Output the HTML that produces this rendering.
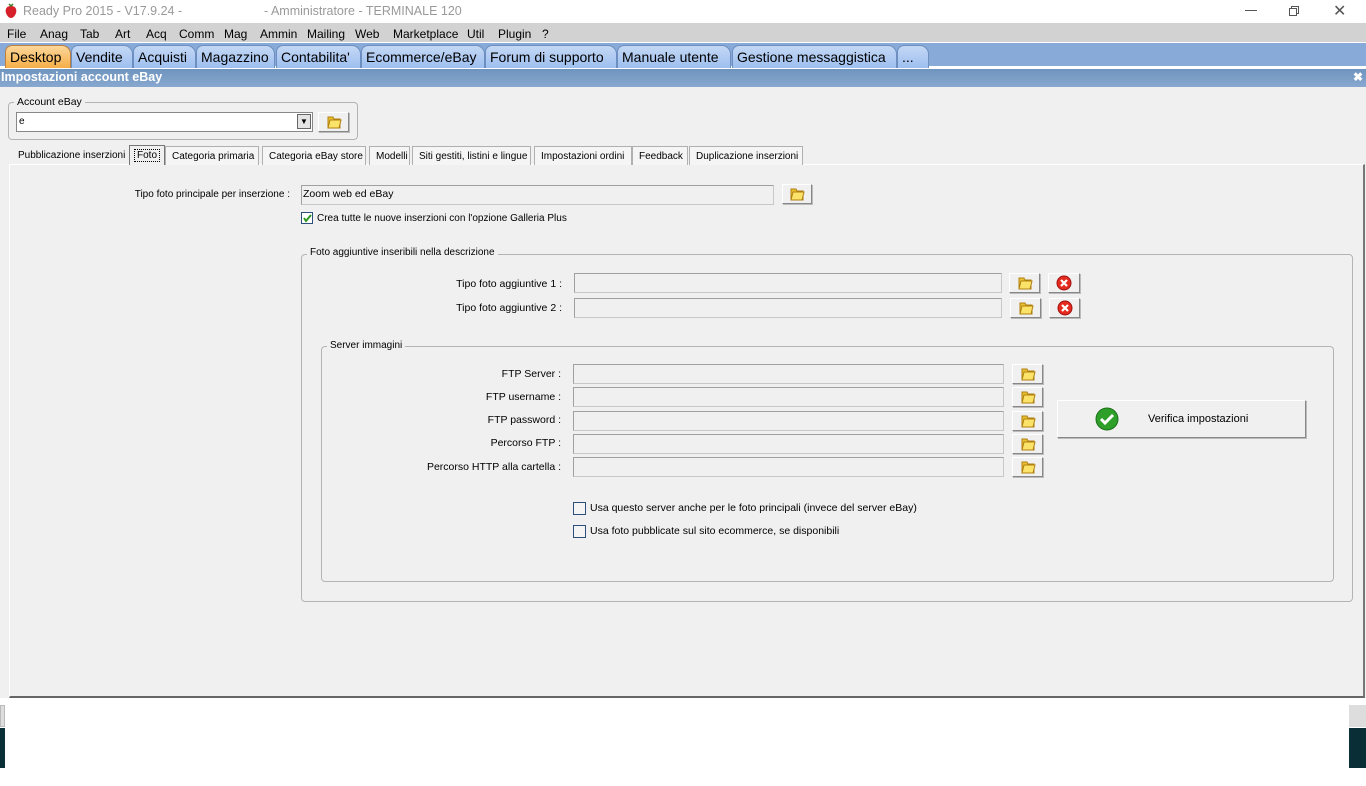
<!DOCTYPE html>
<html><head><meta charset="utf-8"><style>
*{box-sizing:border-box;margin:0;padding:0}
body{width:1366px;height:786px;position:relative;overflow:hidden;background:#fff;font-family:"Liberation Sans",sans-serif;font-size:10.5px;color:#000}
.a{position:absolute}
.menu span{position:absolute;top:4px;font-size:12px;font-family:"Liberation Sans",sans-serif}
.tab{position:absolute;top:45px;height:23px;border:1px solid #6d8fc0;border-bottom:none;border-radius:7px 9px 0 0;background:linear-gradient(#c4d8f4,#9dbff0);font-size:14px;font-family:"Liberation Sans",sans-serif;padding:3px 0 0 4px;white-space:nowrap;overflow:hidden}
.inp{position:absolute;background:#f0f0f0;border:1px solid #c8c8c8;border-top-color:#a0a0a0;border-left-color:#a0a0a0}
.btn{position:absolute;background:#f0f0f0;border:1px solid #fff;border-right-color:#888;border-bottom-color:#888;box-shadow:1px 1px 0 #bbb}
.lbl{position:absolute;text-align:right;font-size:10.5px}
.st{position:absolute;top:146px;height:19px;border:1px solid #b0b0b0;border-bottom:none;padding:4px 0 0 6px;font-size:10px;white-space:nowrap;background:#f5f5f5}
.grp{position:absolute;border:1px solid #b4b4b4;border-radius:4px}
.gt{position:absolute;background:#f0f0f0;padding:0 3px;font-size:10.5px}
.cb{position:absolute;width:12px;height:12px;border:1px solid #2b4f7a;background:#fff}
</style></head><body>
<svg width="0" height="0" style="position:absolute"><defs>
<g id="fold"><path d="M2 3h5l1 2h6v9H2z" fill="#e8c030" stroke="#b08010"/><path d="M4 6h11l-2 8H2z" fill="#fbe36a" stroke="#b08010"/></g>
<g id="xic"><circle cx="8" cy="8" r="7" fill="#e52a1e" stroke="#a01010"/><path d="M5 5l6 6M11 5l-6 6" stroke="#fff" stroke-width="2.2"/></g>
</defs></svg>
<div class="a" style="left:0;top:0;width:1366px;height:23px;background:#fff"></div>
<svg class="a" style="left:4px;top:3px" width="14" height="16"><path d="M7 3C2 3 1 7 2 10s3 5 5 5 4-2 5-5-0-7-5-7z" fill="#d6202a"/><path d="M5 1l2 2 2-2" stroke="#3a7a20" fill="none" stroke-width="1.5"/></svg>
<div class="a" style="left:23px;top:4px;font-size:12.5px;color:#999">Ready Pro 2015 - V17.9.24 -</div>
<div class="a" style="left:264px;top:4px;font-size:12.5px;color:#999">- Amministratore - TERMINALE 120</div>
<div class="a" style="left:1245px;top:10px;width:12px;height:1px;background:#555"></div>
<div class="a" style="left:1291px;top:6px;width:8px;height:8px;border:1px solid #555"></div>
<div class="a" style="left:1289px;top:8px;width:8px;height:8px;border:1px solid #555;background:#fff"></div>
<div class="a" style="left:1333px;top:1px;font-size:16px;color:#555">✕</div>
<div class="a menu" style="left:0;top:23px;width:1366px;height:19px;background:#d2d2d2">
<span style="left:7px">File</span><span style="left:40px">Anag</span><span style="left:80px">Tab</span><span style="left:115px">Art</span><span style="left:146px">Acq</span><span style="left:179px">Comm</span><span style="left:224px">Mag</span><span style="left:260px">Ammin</span><span style="left:307px">Mailing</span><span style="left:355px">Web</span><span style="left:393px">Marketplace</span><span style="left:467px">Util</span><span style="left:498px">Plugin</span><span style="left:542px">?</span></div>
<div class="a" style="left:0;top:42px;width:1366px;height:26px;background:#88aad8;border-top:1px solid #fff;border-bottom:2px solid #fff"></div>
<div class="tab" style="left:5px;width:66px;background:linear-gradient(#fcd79a,#f5ae48);border-color:#c08040">Desktop</div>
<div class="tab" style="left:71px;width:62px">Vendite</div>
<div class="tab" style="left:133px;width:63px">Acquisti</div>
<div class="tab" style="left:196px;width:79px">Magazzino</div>
<div class="tab" style="left:276px;width:85px">Contabilita'</div>
<div class="tab" style="left:361px;width:124px">Ecommerce/eBay</div>
<div class="tab" style="left:485px;width:132px">Forum di supporto</div>
<div class="tab" style="left:617px;width:114px">Manuale utente</div>
<div class="tab" style="left:732px;width:165px">Gestione messaggistica</div>
<div class="tab" style="left:897px;width:32px">...</div>
<div class="a" style="left:0;top:69px;width:1366px;height:18px;background:linear-gradient(#6e94be,#88a8cf)"></div>
<div class="a" style="left:1px;top:70px;color:#fff;font-weight:bold;font-size:12.5px">Impostazioni account eBay</div>
<div class="a" style="left:1351px;top:70px;width:14px;height:14px;color:#fff;font-weight:bold;font-size:12px;text-align:center;line-height:14px">✖</div>
<div class="a" style="left:0;top:87px;width:1366px;height:611px;background:#f0f0f0"></div>
<div class="grp" style="left:8px;top:102px;width:350px;height:38px"></div>
<div class="gt" style="left:14px;top:96px">Account eBay</div>
<div class="a" style="left:16px;top:112px;width:297px;height:20px;background:#fff;border:1px solid #888"></div>
<div class="a" style="left:19px;top:116px;font-size:10px">e</div>
<div class="a" style="left:297px;top:114px;width:14px;height:15px;border:1px solid #666;background:#e4e4e4;font-size:8px;text-align:center;line-height:14px">▼</div>
<div class="btn" style="left:318px;top:112px;width:31px;height:20px"><svg style="margin:1px 7px" width="16" height="16"><use href="#fold"/></svg></div>
<div class="a" style="left:9px;top:164px;width:1356px;height:534px;border:1px solid #fff;border-right:2px solid #777;border-bottom:2px solid #666;background:#f0f0f0"></div>
<div class="st" style="left:12px;width:116px;border:none;background:none">Pubblicazione inserzioni</div>
<div class="st" style="left:129px;width:36px;top:145px;height:20px;background:#f0f0f0;border-color:#777;padding-left:5px"><span style="outline:1px dotted #000;padding:0 2px">Foto</span></div>
<div class="st" style="left:165px;width:94px">Categoria primaria</div>
<div class="st" style="left:262px;width:104px">Categoria eBay store</div>
<div class="st" style="left:369px;width:41px">Modelli</div>
<div class="st" style="left:412px;width:119px">Siti gestiti, listini e lingue</div>
<div class="st" style="left:534px;width:98px">Impostazioni ordini</div>
<div class="st" style="left:632px;width:56px">Feedback</div>
<div class="st" style="left:689px;width:114px">Duplicazione inserzioni</div>
<div class="lbl" style="left:100px;top:189px;width:190px;font-size:10px">Tipo foto principale per inserzione :</div>
<div class="inp" style="left:301px;top:185px;width:473px;height:20px"></div>
<div class="a" style="left:303px;top:188px">Zoom web ed eBay</div>
<div class="btn" style="left:782px;top:184px;width:30px;height:20px"><svg style="margin:1px 6px" width="16" height="16"><use href="#fold"/></svg></div>
<div class="cb" style="left:301px;top:212px"><svg width="10" height="10" style="position:absolute;left:0;top:0"><path d="M2 5l2 3 5-6" stroke="#2a9a20" stroke-width="2" fill="none"/></svg></div>
<div class="a" style="left:317px;top:213px;font-size:10px">Crea tutte le nuove inserzioni con l'opzione Galleria Plus</div>
<div class="grp" style="left:301px;top:254px;width:1052px;height:348px"></div>
<div class="gt" style="left:307px;top:247px;font-size:10px">Foto aggiuntive inseribili nella descrizione</div>
<div class="lbl" style="left:400px;top:278px;width:162px">Tipo foto aggiuntive 1 :</div>
<div class="inp" style="left:574px;top:273px;width:428px;height:20px"></div>
<div class="btn" style="left:1009px;top:273px;width:31px;height:20px"><svg style="margin:1px 7px" width="16" height="16"><use href="#fold"/></svg></div>
<div class="btn" style="left:1048px;top:273px;width:32px;height:20px"><svg style="margin:1px 7px" width="16" height="16"><use href="#xic"/></svg></div>
<div class="lbl" style="left:400px;top:302px;width:162px">Tipo foto aggiuntive 2 :</div>
<div class="inp" style="left:574px;top:298px;width:428px;height:20px"></div>
<div class="btn" style="left:1010px;top:298px;width:31px;height:20px"><svg style="margin:1px 7px" width="16" height="16"><use href="#fold"/></svg></div>
<div class="btn" style="left:1049px;top:298px;width:31px;height:20px"><svg style="margin:1px 7px" width="16" height="16"><use href="#xic"/></svg></div>
<div class="grp" style="left:321px;top:346px;width:1013px;height:236px"></div>
<div class="gt" style="left:327px;top:340px;font-size:10px">Server immagini</div>
<div class="lbl" style="left:400px;top:368px;width:161px">FTP Server :</div>
<div class="lbl" style="left:400px;top:391px;width:161px">FTP username :</div>
<div class="lbl" style="left:400px;top:414px;width:161px">FTP password :</div>
<div class="lbl" style="left:400px;top:437px;width:161px">Percorso FTP :</div>
<div class="lbl" style="left:380px;top:461px;width:181px">Percorso HTTP alla cartella :</div>
<div class="inp" style="left:573px;top:364px;width:431px;height:20px"></div>
<div class="inp" style="left:573px;top:387px;width:431px;height:20px"></div>
<div class="inp" style="left:573px;top:411px;width:431px;height:20px"></div>
<div class="inp" style="left:573px;top:434px;width:431px;height:20px"></div>
<div class="inp" style="left:573px;top:457px;width:431px;height:20px"></div>
<div class="btn" style="left:1012px;top:364px;width:31px;height:20px"><svg style="margin:1px 7px" width="16" height="16"><use href="#fold"/></svg></div>
<div class="btn" style="left:1012px;top:387px;width:31px;height:20px"><svg style="margin:1px 7px" width="16" height="16"><use href="#fold"/></svg></div>
<div class="btn" style="left:1012px;top:411px;width:31px;height:20px"><svg style="margin:1px 7px" width="16" height="16"><use href="#fold"/></svg></div>
<div class="btn" style="left:1012px;top:434px;width:31px;height:20px"><svg style="margin:1px 7px" width="16" height="16"><use href="#fold"/></svg></div>
<div class="btn" style="left:1012px;top:457px;width:31px;height:20px"><svg style="margin:1px 7px" width="16" height="16"><use href="#fold"/></svg></div>
<div class="btn" style="left:1057px;top:400px;width:249px;height:38px"></div>
<svg class="a" style="left:1095px;top:407px" width="24" height="24"><circle cx="12" cy="12" r="11" fill="#2ea02a" stroke="#1a7018"/><path d="M6 12l4 4 8-8" stroke="#fff" stroke-width="3" fill="none"/></svg>
<div class="a" style="left:1148px;top:413px;font-size:11px">Verifica impostazioni</div>
<div class="cb" style="left:573px;top:502px;width:13px;height:13px;background:#f4f4f4"></div>
<div class="a" style="left:590px;top:502px">Usa questo server anche per le foto principali (invece del server eBay)</div>
<div class="cb" style="left:573px;top:525px;width:13px;height:13px;background:#f4f4f4"></div>
<div class="a" style="left:590px;top:525px">Usa foto pubblicate sul sito ecommerce, se disponibili</div>
<div class="a" style="left:0;top:705px;width:5px;height:22px;background:#ddd;border:1px solid #bbb"></div>
<div class="a" style="left:0;top:728px;width:5px;height:40px;background:#0a2e36"></div>
<div class="a" style="left:1349px;top:705px;width:17px;height:22px;background:#ddd"></div>
<div class="a" style="left:1349px;top:728px;width:17px;height:40px;background:#0a2e36"></div>
</body></html>
